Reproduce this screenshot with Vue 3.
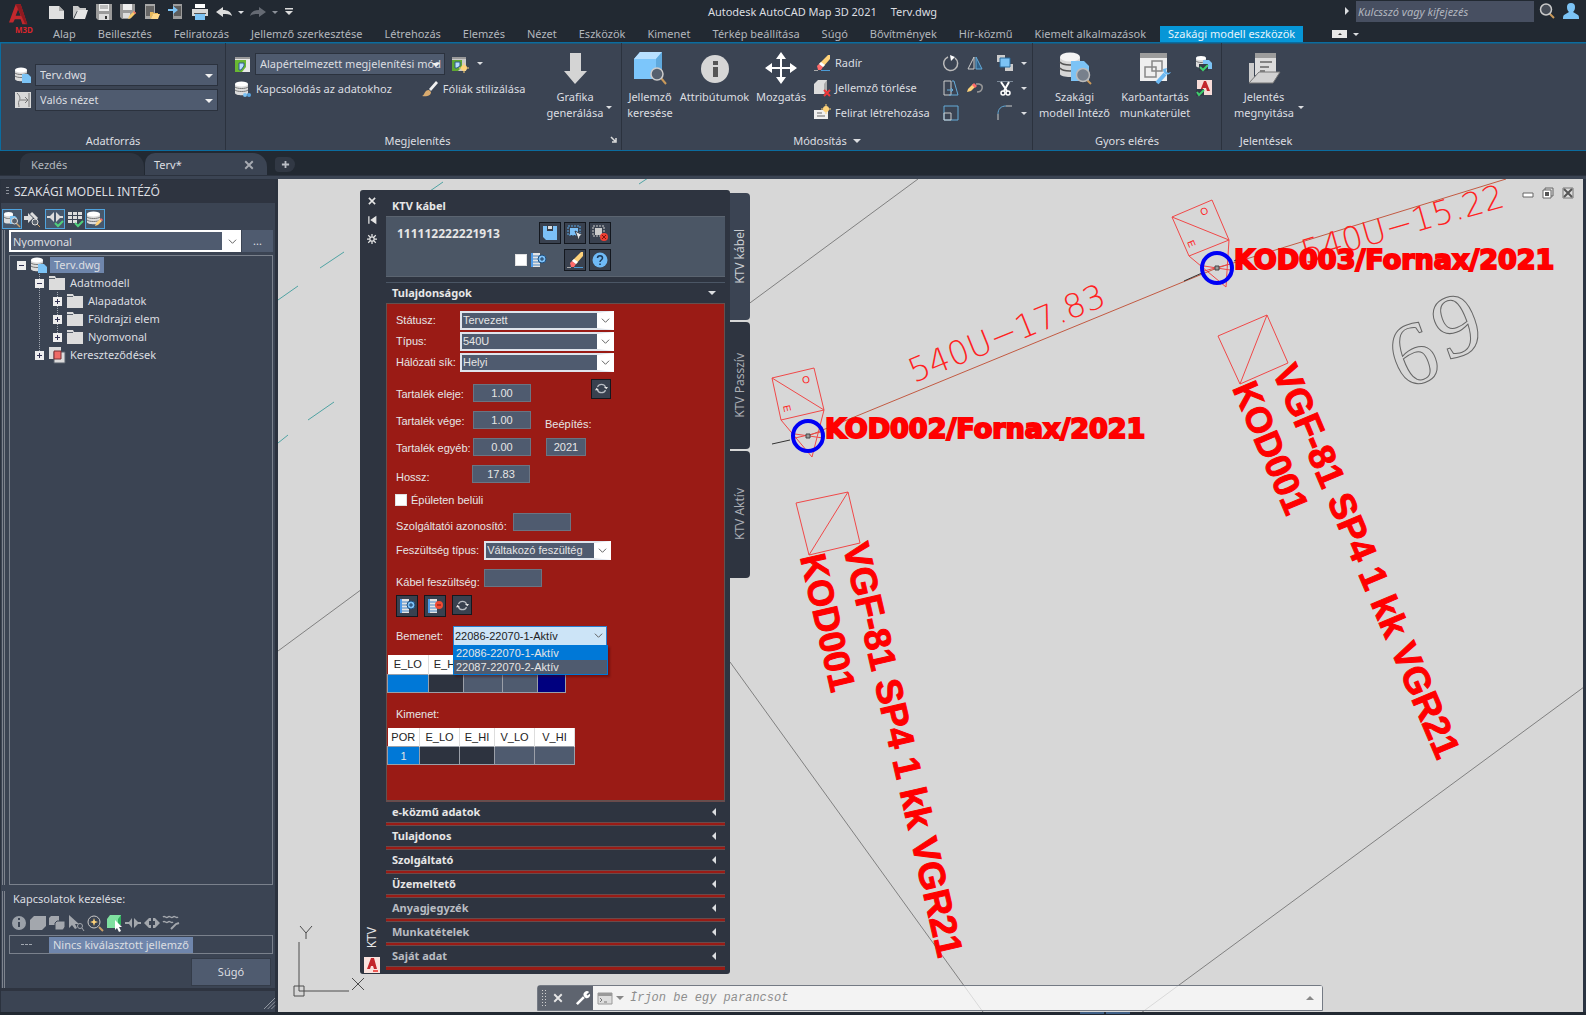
<script setup>
import { ref } from 'vue'

const icons = {
  newFile: '<path d="M1 2h10l5 5v8H1z" fill="#e0e0e0"/><path d="M11 2v5h5z" fill="#aaa"/>',
  open: '<path d="M1 15V2h5l2 2h6v3H5z" fill="#c9c9c9"/><path d="M2 15 6 6h10l-3 9z" fill="#e6e6e6"/>',
  save: '<path d="M0 0h16v16H2l-2-2z" fill="#9a9a9a"/><path d="M3 0h10v7H3z" fill="#efefef"/><path d="M3 10h10v6H3z" fill="#dcdcdc"/><path d="M9 12h2v3H9z" fill="#333"/><path d="M4 2h8M4 4h8" stroke="#888"/>',
  saveAs: '<path d="M0 0h15v9l-5 6H2l-2-2z" fill="#9a9a9a"/><path d="M3 0h9v6H3z" fill="#efefef"/><path d="M3 9h7v5H3z" fill="#ddd"/><path d="m8 15 1-3 5-5 2 2-5 5z" fill="#f5c96b"/><path d="m14 7 2 2-1 1-2-2z" fill="#e86b6b"/>',
  openMobile: '<path d="M1 0h10v15H1z" fill="#a8a8a8"/><path d="M2 2h8v10H2z" fill="#666"/><path d="M6 15V8h3l1 1h4v2H9z" fill="#e8b95c"/><path d="m7 15 2-5h7l-2 5z" fill="#ffd98a"/>',
  saveMobile: '<path d="M5 0h9v15H5z" fill="#9c9c9c"/><path d="M6 2h7v10H6z" fill="#5d5d5d"/><path d="M0 5h5V2l5 4-5 4V7H0z" fill="#7cc3f5"/>',
  print: '<path d="M3 0h10v4H3z" fill="#fff"/><path d="M0 5h16v7H0z" fill="#d8d8d8"/><path d="M2 9h12v1H2z" fill="#555"/><path d="M3 10h10v6H3z" fill="#7cc3f5"/>',
  undo: '<path d="m0 8 7-5v3c5 0 8 2 9 6-3-2-5-2-9-2v3z" fill="#dcdcdc"/>',
  redo: '<path d="M16 8 9 3v3c-5 0-8 2-9 6 3-2 5-2 9-2v3z" fill="#656a73"/>',
  qatMenu: '<path d="M4 4h8v1.500H4zM4 7h8l-4 4z" fill="#dcdcdc"/>',
  lens: '<path d="m10 10 5 5" stroke="#c9995a" stroke-width="2"/><circle cx="7" cy="6.500" r="5.500" fill="#454b55" stroke="#c9c9c9" stroke-width="1.500"/>',
  user: '<path d="M4 4a4 4 0 0 1 8 0c0 3-1 4-2 5l5 3c1 1 1 2 1 4H0c0-2 0-3 1-4l5-3C5 8 4 7 4 4z" fill="#7cc3f5"/>',
  dbFile: '<path d="M0 3v9c0 3 12 3 12 0V3z" fill="#dcdcdc"/><path d="M0 6c2 2 10 2 12 0M0 9c2 2 10 2 12 0" stroke="#777" fill="none"/><ellipse cx="6" cy="3" rx="6" ry="2.500" fill="#fff"/><path d="M7 7h6l3 3v6H7z" fill="#7cc3f5"/>',
  viewMode: '<path d="M0 0h16v16H0z" fill="#d9d9d9"/><path d="M2 1c4 4 3 6 2 8s0 4 0 6M5 8h8M10 5l3 3-3 3M14 1v14" stroke="#777" fill="none"/>',
  mapStyle: '<path d="M0 1h15v15H0z" fill="#e8e8e8"/><path d="M0 1h15v2H0z" fill="#999"/><path d="M0 4h11v7l-4 5H0z" fill="#69b832"/><path d="M4 7h5v3l-3 4H4z" fill="#b8dcff" stroke="#2f5a8b"/>',
  mapStyleNew: '<path d="M0 1h14v14H0z" fill="#c9c9c9"/><path d="M0 1h14v2H0z" fill="#999"/><path d="M0 4h10v7l-4 4H0z" fill="#5ea631"/><path d="M3 6h5v4l-3 2H3z" fill="#b8dcff" stroke="#2f5a8b"/><circle cx="12" cy="12" r="3" fill="#ffd37a"/><path d="M12 7v10M7 12h10" stroke="#ffd37a"/>',
  db: '<path d="M0 3v9c0 3 13 3 13 0V3z" fill="#dcdcdc"/><path d="M0 6c2 2 11 2 13 0M0 9c2 2 11 2 13 0" stroke="#777" fill="none"/><ellipse cx="6.500" cy="3" rx="6.500" ry="2.500" fill="#fff"/><circle cx="10" cy="14" r="2" fill="#7cc3f5"/><circle cx="14" cy="14" r="2" fill="#5aa5df"/>',
  brush: '<path d="m7 8 7-8 2 2-7 8z" fill="#f2f2f2"/><path d="M0 15c3-1 2-6 7-6l2 2c0 4-5 5-9 4z" fill="#d9ab6f"/>',
  eraser: '<path d="m5 9 9-9h2v4l-7 8z" fill="#ffd37a"/><path d="m3 11 2-2 4 3-2 3H4z" fill="#ff6b6b"/><path d="m5 9 2-2 4 3-2 2z" fill="#fff"/><path d="M0 15.500h4" stroke="#aaa"/><path d="M7 15.500h9" stroke="#4d9bd6"/>',
  cubeDel: '<path d="M0 4 4 0h9v10l-3 4H0z" fill="#dcdcdc"/><path d="m10 4 3-4v10l-3 4z" fill="#aaa"/><path d="m10 10 6 6m0-6-6 6" stroke="#f0373a" stroke-width="2"/>',
  label: '<path d="M0 5h14v9H0z" fill="#f0f0f0"/><path d="M3 8h5M3 11h8" stroke="#666"/><circle cx="12" cy="4" r="3" fill="#ffd37a"/><path d="M12-1v10M7 4h10" stroke="#ffd37a"/>',
  rotate: '<path d="M12 3a7 7 0 1 1-7-1" fill="none" stroke="#bbb" stroke-width="1.500"/><path d="m7 0 5 2-4 4z" fill="#fff"/>',
  mirror: '<path d="M7 2v12H1z" fill="none" stroke="#ccc"/><path d="M9 2v12h6z" fill="#2f5f86" stroke="#64abd9"/>',
  bringFront: '<path d="M0 0h8v7H0zM8 9h8v7H8z" fill="#ccc"/><path d="M3 3h10v9H3z" fill="#7cc3f5" stroke="#2b6a9c"/>',
  stretch: '<path d="M1 1h7v14H1z" fill="none" stroke="#ccc"/><path d="M9 1h2l4 14H6M4 10h6M8 8l2 2-2 2" fill="none" stroke="#64abd9"/>',
  editPoly: '<path d="M9 4h3c5 1 4 8-2 8" fill="none" stroke="#999" stroke-width="1.500"/><path d="m0 12 1-3 5-5 3 2-5 5z" fill="#ffd37a"/><path d="m5 5 2-2 3 3-2 2z" fill="#ff6b6b"/>',
  trim: '<path d="M0 1.500h16" stroke="#7d8a99"/><path d="m4 2 6 9M12 2 7 11" stroke="#fff" stroke-width="2"/><circle cx="6" cy="13" r="2" fill="none" stroke="#fff" stroke-width="1.500"/><circle cx="11" cy="13" r="2" fill="none" stroke="#fff" stroke-width="1.500"/>',
  scale: '<path d="M1 1h14v14H1z" fill="none" stroke="#64abd9"/><path d="M1 8h7v7H1z" fill="none" stroke="#ccc"/>',
  fillet: '<path d="M1 15V9" stroke="#ccc"/><path d="M1 9c0-5 3-8 8-8" fill="none" stroke="#64abd9"/><path d="M9 1h6" stroke="#ccc"/>',
  dbCheck: '<path d="M0 3v8c0 2 10 2 10 0V3z" fill="#dcdcdc"/><path d="M0 6c2 2 8 2 10 0" stroke="#777" fill="none"/><ellipse cx="5" cy="3" rx="5" ry="2" fill="#fff"/><path d="M7 5h6l3 3v6H7z" fill="#7cc3f5"/><path d="M3 9h9v7H3z" fill="#333b47"/><path d="m4 12 3 3 5-5" stroke="#3fcf6c" stroke-width="2" fill="none"/>',
  cadCheck: '<path d="M1 0h15v15H1z" fill="#f7dcd8"/><path d="m4 11 4-10h2l4 10h-3l-1-3H7l-1 3z" fill="#c3262b"/><path d="M0 9h8v7H0z" fill="#333b47"/><path d="m1 12 2 3 5-5" stroke="#3fcf6c" stroke-width="2" fill="none"/>',
  dbLens: '<path d="M0 3v8c0 2 9 2 9 0V3z" fill="#dcdcdc"/><path d="M0 6c2 2 7 2 9 0" stroke="#777" fill="none"/><ellipse cx="4.500" cy="3" rx="4.500" ry="2" fill="#fff"/><path d="M6 5h5l2 2v6H6z" fill="#7cc3f5"/><path d="m12 12 4 4" stroke="#caa06a" stroke-width="1.500"/><circle cx="10.500" cy="10" r="3" fill="#59616c" stroke="#ddd"/>',
  flowLens: '<path d="M0 5h4V2l5 5-5 5V9H0z" fill="#ddd"/><path d="m7 2 6 6" stroke="#ddd" stroke-width="3"/><path d="m13 13 3 3" stroke="#caa06a"/><circle cx="11" cy="11" r="3" fill="#59616c" stroke="#ddd"/>',
  flowCheck: '<path d="M0 5h3l4-4v10L3 7H0zM16 5h-3L9 1v10l4-4h3z" fill="#ddd"/><path d="m8 12 3 3 5-5" stroke="#4fd07c" stroke-width="2" fill="none"/>',
  gridCheck: '<path d="M1 1h4v3H1zM6 1h4v3H6zM11 1h4v3h-4zM1 5h4v3H1zM6 5h4v3H6zM11 5h4v3h-4zM1 9h4v3H1zM6 9h4v3H6z" fill="#ddd"/><path d="m8 12 3 3 5-5" stroke="#4fd07c" stroke-width="2" fill="none"/>',
  dbEdit: '<path d="M0 3v8c0 3 13 3 13 0V3z" fill="#dcdcdc"/><path d="M0 6c2 2 11 2 13 0M0 9c2 2 11 2 13 0" stroke="#777" fill="none"/><ellipse cx="6.500" cy="3" rx="6.500" ry="2.500" fill="#fff"/><path d="m8 15 1-3 4-4 2 2-4 4z" fill="#ffd37a"/><path d="m13 8 2 2 1-1-2-2z" fill="#ff6b6b"/>',
  folder: '<path d="M0 1h6l1 2h9v12H0z" fill="#dcdcdc"/><path d="M0 3.500h6" stroke="#59616c"/>',
  cross: '<path d="M0 0h12v12H0z" fill="#dcdcdc"/><path d="M5 5h11v11H5z" fill="#dcdcdc" stroke="#59616c"/><path d="M5 4h7v8H5z" fill="#ef6a66" stroke="#7a2f33"/>',
  info: '<circle cx="8" cy="8" r="7" fill="#9aa0a8"/><path d="M7 7h2v5H7zM7 3h2v2H7z" fill="#3b4453"/>',
  box: '<path d="M0 5 4 1h12v10l-4 4H0z" fill="#a3a7ad"/>',
  boxes: '<path d="M0 3 2 1h8v6l-2 3H0z" fill="#a3a7ad"/><path d="M6 8 8 6h8v6l-2 3H6z" fill="#a3a7ad" stroke="#3b4453"/>',
  pick: '<path d="M1 0v13l3-3 3 4 2-1-2-4h4z" fill="#a3a7ad"/><circle cx="12" cy="11" r="2.500" fill="none" stroke="#a3a7ad"/><path d="m14 13 2 3" stroke="#a3a7ad"/>',
  zoomIn: '<circle cx="7" cy="7" r="6" fill="none" stroke="#c9c9c9"/><path d="m7 3 1 3 3 1-3 1-1 3-1-3-3-1 3-1z" fill="#ffd37a"/><path d="m12 12 4 4" stroke="#caa06a" stroke-width="2"/>',
  greenBox: '<path d="M1 4 4 0h11v9l-3 4H1z" fill="#7fe0a0"/><path d="m12 4 3-4v9l-3 4z" fill="#2fae5c"/><path d="M9 5v10l2-2 2 4 2-1-2-4h3z" fill="#fff"/>',
  link: '<path d="M0 7h4l3-4v10L4 9H0zM16 7h-3L9 3v10l4-4h3z" fill="#a3a7ad"/>',
  link2: '<path d="M0 8 5 3h2v3H5v4h2v3H5zM16 8l-5-5H9v3h2v4H9v3h2z" fill="#a3a7ad"/>',
  wave: '<path d="M0 2c2-2 3 2 5 0s3 2 5 0 3 2 5 0M0 7c2-2 3 2 5 0s3 2 5 0" stroke="#a3a7ad" stroke-width="1.500" fill="none"/><path d="m8 14 5-5 3-1" stroke="#a3a7ad" stroke-width="2"/>',
  disk: '<path d="M1 1h14v14H4l-3-3z" fill="#7cc0f7"/><path d="M5 0h6v6H5z" fill="#333b47"/><path d="M6 1h4v3H6z" fill="#ddd"/>',
  select: '<path d="M1 1h12v9H1z" fill="none" stroke="#5aa8e6" stroke-dasharray="2 1"/><path d="M3 3h8v7H3z" fill="#7cc0f7"/><path d="m8 6 8 4-3 1-1 5z" fill="#e6e6e6" stroke="#333b47"/>',
  selectDel: '<path d="M1 1h11v10H1z" fill="none" stroke="#ccc" stroke-dasharray="2 1"/><path d="M3 3h7v7H3z" fill="#ccc"/><circle cx="12" cy="12" r="4" fill="#ef3e32"/><path d="m10 10 4 4m0-4-4 4" stroke="#7c1510"/>',
  rowAdd: '<path d="M1 1h9v14H1z" fill="#e4e4e4"/><path d="M2 1v14" stroke="#4d9bea" stroke-width="2"/><path d="M3 4h7M3 7h7M3 10h7M3 13h7" stroke="#4b87c4"/><circle cx="12" cy="7" r="4" fill="#7cc0f7" stroke="#1f4e7d"/><path d="M12 5v4M10 7h4" stroke="#1f3b5c"/>',
  rowDel: '<path d="M1 1h9v14H1z" fill="#e4e4e4"/><path d="M2 1v14" stroke="#4d9bea" stroke-width="2"/><path d="M3 4h7M3 7h7M3 10h7M3 13h7" stroke="#4b87c4"/><circle cx="12" cy="7" r="4" fill="#f04a32"/><path d="M10 7h4" stroke="#7c1510"/>',
  help: '<circle cx="8" cy="8" r="7.500" fill="#6fbaf7"/><path d="M5.500 6c0-3 5-3 5 0 0 2-2.500 2-2.500 4M8 11.500v1.500" stroke="#1d3a5a" stroke-width="1.500" fill="none"/>',
  refresh: '<path d="M3 6a5.500 5.500 0 0 1 10 0M13 10a5.500 5.500 0 0 1-10 0" stroke="#b9bdc4" stroke-width="1.500" fill="none"/><path d="M11 6h5l-2 3zM5 10H0l2-3z" fill="#e6e6e6"/>',
  close: '<path d="m3 3 10 10M13 3 3 13" stroke="currentColor" stroke-width="2.500"/>',
  pin: '<path d="M3 2v12M14 3v10L7 8z" stroke="#e6e6e6" stroke-width="2" fill="#e6e6e6"/>',
  gear: '<circle cx="8" cy="8" r="3.500" fill="none" stroke="#e6e6e6" stroke-width="2"/><path d="M8 0v4M8 12v4M0 8h4M12 8h4M2 2l3 3M11 11l3 3M14 2l-3 3M5 11l-3 3" stroke="#e6e6e6" stroke-width="2"/>',
  cad: '<path d="M0 0h16v16H0z" fill="#fbe3de"/><path d="m3 12 4-11h3l3 11h-3l-1-3H7l-1 3z" fill="#c3262b"/><path d="M9 13h5v2H9z" fill="#ee5a55"/>',
  wrench: '<path d="m1 15 8-8" stroke="#fff" stroke-width="3"/><path d="M15 1a4 4 0 0 0-6 5l2 2a4 4 0 0 0 5-5l-3 2-1-1z" fill="#fff"/>',
  prompt: '<path d="M1 3h14v11H1z" fill="#ddd" stroke="#999"/><path d="M1 3h14v3H1z" fill="#999"/><path d="m3 8 2 2-2 2M7 12h3" stroke="#777" fill="none"/>',
  arrowDown: '<path d="M11 1h11v18h6L16 32 5 19h6z" fill="#d4d4d4"/>',
  cubeFind: '<path d="M0 7 6 0h22v19l-6 8H0z" fill="#7cc6fb"/><path d="M0 7 6 0h22l-6 7z" fill="#b8e0ff"/><path d="m22 7 6-7v20l-6 7z" fill="#5fa9dd"/><path d="m27 26 5 6" stroke="#c9995a" stroke-width="2"/><circle cx="23" cy="22" r="6" fill="#56606e" stroke="#ccc" stroke-width="1.500"/>',
  bigInfo: '<circle cx="16" cy="17" r="14" fill="#d6d6d6"/><path d="M14 15h5v10h-5zM14 9h5v4h-5z" fill="#555"/>',
  move: '<path d="M16 5v22M5 16h22" stroke="#fff" stroke-width="2"/><path d="m16 0 5 7H11zM16 32l5-7H11zM0 16l7-5v10zM32 16l-7-5v10z" fill="#fff"/>',
  bigDbFind: '<path d="M1 5v17c0 4 20 4 20 0V5z" fill="#d6d6d6"/><path d="M1 10c3 4 17 4 20 0M1 16c3 4 17 4 20 0" stroke="#555" stroke-width="1.500" fill="none"/><ellipse cx="11" cy="5" rx="10" ry="4.500" fill="#f4f4f4"/><path d="M12 9h13l5 5v15H12z" fill="#7cc3f5"/><path d="m27 27 5 5" stroke="#c9995a" stroke-width="2"/><circle cx="24" cy="23" r="6.500" fill="#77808c" stroke="#bbb" stroke-width="1.500"/>',
  maintain: '<path d="M1 1h27v28H1z" fill="#efefef"/><path d="M1 1h27v5H1z" fill="#9c9c9c"/><path d="M6 15h11v10H6zM13 9h10v10H13z" fill="#efefef" stroke="#888" stroke-width="1.500"/><path d="m18 31 8-9" stroke="#6bb8f2" stroke-width="4"/><path d="M24 17c0 5 5 8 8 3l-3 1-2-2 1-3z" fill="#6bb8f2"/>',
  report: '<path d="M1 11h5v20H1z" fill="#ccc"/><path d="M7 1h21v22H7z" fill="#dcdcdc"/><path d="M7 1h21v5H7z" fill="#9c9c9c"/><path d="M12 10h12M12 15h9M12 19h5" stroke="#666" stroke-width="1.500"/><path d="M1 31 11 20h21l-7 11z" fill="#d2d2d2" stroke="#777"/>'
}

const quick = ['newFile', 'open', 'save', 'saveAs', 'openMobile', 'saveMobile', 'print']
const tabs = ['Alap', 'Beillesztés', 'Feliratozás', 'Jellemző szerkesztése', 'Létrehozás', 'Elemzés', 'Nézet', 'Eszközök', 'Kimenet', 'Térkép beállítása', 'Súgó', 'Bővítmények', 'Hír-közmű', 'Kiemelt alkalmazások', 'Szakági modell eszközök']
const activeTab = ref('Szakági modell eszközök')
const modifyList = [
  { icon: 'eraser', text: 'Radír' },
  { icon: 'cubeDel', text: 'Jellemző törlése' },
  { icon: 'label', text: 'Felirat létrehozása' }
]
const sideTools = [
  { icon: 'dbLens', on: true },
  { icon: 'flowLens' },
  { icon: 'flowCheck', on: true, split: true },
  { icon: 'gridCheck' },
  { icon: 'dbEdit', on: true }
]
const models = ['Alapadatok', 'Földrajzi elem', 'Nyomvonal']
const linkTools = ['info', 'box', 'boxes', 'pick', 'zoomIn', 'greenBox', 'link', 'link2', 'wave']
const combos = [
  { id: 'status', label: 'Státusz:', value: 'Tervezett' },
  { id: 'type', label: 'Típus:', value: '540U' },
  { id: 'plane', label: 'Hálózati sík:', value: 'Helyi' }
]
const inputs = ['22086-22070-1-Aktív', '22087-22070-2-Aktív']
const sections = [
  { text: 'e-közmű adatok' },
  { text: 'Tulajdonos' },
  { text: 'Szolgáltató' },
  { text: 'Üzemeltető' },
  { text: 'Anyagjegyzék', dim: true },
  { text: 'Munkatételek', dim: true },
  { text: 'Saját adat', dim: true }
]
const paletteTabs = ['KTV kábel', 'KTV Passzív', 'KTV Aktív']
const command = ref('')
const inside = ref(false)
</script>

<template>
  <div class="app">
    <header class="top">
      <div class="logo">
        <svg width="24" height="26" viewBox="0 0 24 26"><path d="M8 0h6l8 24h-6l-2-6H7l-2 4H0z" fill="#c2282d"/><path d="m11 6 3 8H8z" fill="#222932"/><path d="M8 0h6l8 24-3-1z" fill="#8f1a20"/></svg>
        <span>M3D</span>
      </div>
      <div class="top-main">
        <div class="title-row">
          <div class="quick">
            <button v-for="q in quick" :key="q" :aria-label="q"><svg viewBox="0 0 16 16" v-html="icons[q]" /></button>
            <button aria-label="undo"><svg viewBox="0 0 16 16" v-html="icons.undo" /></button>
            <i class="caret" />
            <button aria-label="redo"><svg viewBox="0 0 16 16" v-html="icons.redo" /></button>
            <i class="caret dim" />
            <button aria-label="menu"><svg viewBox="0 0 16 16" v-html="icons.qatMenu" /></button>
          </div>
          <div class="title"><span>Autodesk AutoCAD Map 3D 2021</span><span>Terv.dwg</span></div>
          <div class="search">
            <i class="play" />
            <input type="text" placeholder="Kulcsszó vagy kifejezés" aria-label="Keresés">
            <button aria-label="search"><svg viewBox="0 0 16 16" v-html="icons.lens" /></button>
            <button aria-label="user"><svg viewBox="0 0 16 16" v-html="icons.user" /></button>
          </div>
        </div>
        <nav class="tabs">
          <button v-for="t in tabs" :key="t" :class="{ active: t === activeTab }" @click="activeTab = t">{{ t }}</button>
          <span class="mini"><i /></span><i class="caret" />
        </nav>
      </div>
    </header>

    <section class="ribbon">
      <div class="panel source">
        <div class="body">
          <label class="field"><svg viewBox="0 0 16 16" v-html="icons.dbFile" /><span class="drop"><select aria-label="Forrás"><option>Terv.dwg</option></select><i class="caret wide" /></span></label>
          <label class="field"><svg viewBox="0 0 16 16" v-html="icons.viewMode" /><span class="drop"><select aria-label="Nézet"><option>Valós nézet</option></select><i class="caret wide" /></span></label>
        </div>
        <div class="caption">Adatforrás</div>
      </div>
      <div class="panel display">
        <div class="body">
          <div class="stack">
            <div class="line">
              <label class="field"><svg viewBox="0 0 16 16" v-html="icons.mapStyle" /><span class="drop"><select aria-label="Megjelenítési mód"><option>Alapértelmezett megjelenítési mód</option></select><i class="caret wide" /></span></label>
              <button class="flat" aria-label="new style"><svg viewBox="0 0 16 16" v-html="icons.mapStyleNew" /><i class="caret" /></button>
            </div>
            <div class="line spread">
              <button class="flat"><svg viewBox="0 0 16 16" v-html="icons.db" />Kapcsolódás az adatokhoz</button>
              <button class="flat"><svg viewBox="0 0 16 16" v-html="icons.brush" />Fóliák stilizálása</button>
            </div>
          </div>
          <button class="big"><svg viewBox="0 0 32 32" v-html="icons.arrowDown" /><span>Grafika<br>generálása</span></button>
          <i class="caret late" />
        </div>
        <div class="caption">Megjelenítés<svg class="launch" viewBox="0 0 8 8"><path d="M1 1l4 4M6 2v4H2" stroke="#ddd" stroke-width="1.500" fill="none"/></svg></div>
      </div>
      <div class="panel modify">
        <div class="body">
          <button class="big"><svg viewBox="0 0 32 32" v-html="icons.cubeFind" /><span>Jellemző<br>keresése</span></button>
          <button class="big"><svg viewBox="0 0 32 32" v-html="icons.bigInfo" /><span>Attribútumok</span></button>
          <button class="big"><svg viewBox="0 0 32 32" v-html="icons.move" /><span>Mozgatás</span></button>
          <div class="list">
            <button v-for="m in modifyList" :key="m.text" class="flat"><svg viewBox="0 0 16 16" v-html="icons[m.icon]" />{{ m.text }}</button>
          </div>
          <div class="tools">
            <svg viewBox="0 0 16 16" v-html="icons.rotate" /><svg viewBox="0 0 16 16" v-html="icons.mirror" /><svg viewBox="0 0 16 16" v-html="icons.bringFront" /><i class="caret" />
            <svg viewBox="0 0 16 16" v-html="icons.stretch" /><svg viewBox="0 0 16 16" v-html="icons.editPoly" /><svg viewBox="0 0 16 16" v-html="icons.trim" /><i class="caret" />
            <svg viewBox="0 0 16 16" v-html="icons.scale" /><span /><svg viewBox="0 0 16 16" v-html="icons.fillet" /><i class="caret" />
          </div>
        </div>
        <div class="caption">Módosítás<i class="caret wide" /></div>
      </div>
      <div class="panel fast">
        <div class="body">
          <button class="big"><svg viewBox="0 0 32 32" v-html="icons.bigDbFind" /><span>Szakági<br>modell Intéző</span></button>
          <button class="big"><svg viewBox="0 0 32 32" v-html="icons.maintain" /><span>Karbantartás<br>munkaterület</span></button>
          <div class="list">
            <button class="flat" aria-label="db check"><svg viewBox="0 0 16 16" v-html="icons.dbCheck" /></button>
            <button class="flat" aria-label="cad check"><svg viewBox="0 0 16 16" v-html="icons.cadCheck" /></button>
          </div>
        </div>
        <div class="caption">Gyors elérés</div>
      </div>
      <div class="panel reports">
        <div class="body">
          <button class="big"><svg viewBox="0 0 32 32" v-html="icons.report" /><span>Jelentés<br>megnyitása</span></button>
          <i class="caret late" />
        </div>
        <div class="caption">Jelentések</div>
      </div>
    </section>

    <nav class="docs">
      <button class="doc">Kezdés</button>
      <button class="doc current">Terv*<svg viewBox="0 0 16 16" v-html="icons.close" /></button>
      <button class="plus" aria-label="new tab"><svg viewBox="0 0 10 10"><path d="M5 1v8M1 5h8" stroke="#b9bdc4" stroke-width="2"/></svg></button>
    </nav>

    <main class="work">
      <aside class="side">
        <h2><i class="grip" />SZAKÁGI MODELL INTÉZŐ</h2>
        <div class="side-tools">
          <button v-for="s in sideTools" :key="s.icon" :class="{ on: s.on, split: s.split }" :aria-label="s.icon"><svg viewBox="0 0 16 16" v-html="icons[s.icon]" /></button>
        </div>
        <div class="ridge upper">
          <div class="pick">
            <span class="combo"><select aria-label="Réteg"><option>Nyomvonal</option></select><svg viewBox="0 0 10 10"><path d="M1 3l4 4 4-4" fill="none" stroke="#555" stroke-width="1"/></svg></span>
            <button class="more">...</button>
          </div>
          <div class="tree">
            <div class="node root"><b class="exp minus" /><svg viewBox="0 0 16 16" v-html="icons.dbFile" /><span class="chosen">Terv.dwg</span></div>
            <ul>
              <li>
                <div class="node"><b class="exp minus" /><svg viewBox="0 0 16 16" v-html="icons.folder" /><span>Adatmodell</span></div>
                <ul>
                  <li v-for="m in models" :key="m"><div class="node"><b class="exp" /><svg viewBox="0 0 16 16" v-html="icons.folder" /><span>{{ m }}</span></div></li>
                </ul>
              </li>
              <li><div class="node"><b class="exp" /><svg viewBox="0 0 16 16" v-html="icons.cross" /><span>Kereszteződések</span></div></li>
            </ul>
          </div>
        </div>
        <div class="ridge lower">
          <p>Kapcsolatok kezelése:</p>
          <div class="link-tools">
            <button v-for="l in linkTools" :key="l" :aria-label="l"><svg viewBox="0 0 16 16" v-html="icons[l]" /></button>
          </div>
          <div class="picked"><i /><span>Nincs kiválasztott jellemző</span></div>
          <button class="help">Súgó</button>
        </div>
        <div class="corner"><svg viewBox="0 0 12 12"><path d="M0 12 12 0M4 12l8-8M8 12l4-4" stroke="#9aa0a8"/></svg></div>
      </aside>

      <div class="canvas">
        <svg class="drawing" width="100%" height="100%">
          <g transform="translate(-278 -179)">
            <g class="parcel">
              <path d="M278 651 918 179M730 662l253 350M1584 687l-443 326" />
            </g>
            <path class="dash" d="M278 300l20-14M320 268l24-16M308 420l26-18M278 443l10-8M430 191l13-9M639 184l9-6" />
            <path class="cable" d="M808 436 1217 268 1506 179" />
            <g class="pole">
              <path d="M772 378 814 368 824 410 781 420zL824 410M781 420 812 457 824 410M795 434l28 4M795 438l26-6" />
              <path d="M1172 217 1212 200 1229 240 1189 256zL1229 240M1189 256l37 31 3-47M1204 266l26 4M1204 271l26-7" />
              <path d="M796 503 848 492 860 543 809 555zM848 492 809 555" />
              <path d="M1218 336 1267 315 1288 363 1240 384zM1267 315 1240 384" />
            </g>
            <path class="tick" d="M772 444l18-4M1184 281l18-8M1234 261l6-3" />
            <g class="tag">
              <text transform="translate(803 384) rotate(-13)">O</text>
              <text transform="translate(783 406) rotate(77)">E</text>
              <text transform="translate(1202 216) rotate(-23)">O</text>
              <text transform="translate(1187 242) rotate(67)">E</text>
            </g>
            <g class="length">
              <text transform="translate(914 383) rotate(-22)">540U−17.83</text>
              <text transform="translate(1305 264) rotate(-16)">540U−15.22</text>
            </g>
            <g class="number">
              <text transform="translate(1402 390) rotate(-20)">6</text>
              <text transform="translate(1446 361) rotate(-20)">9</text>
            </g>
            <g class="code">
              <text x="825" y="438">KOD002/Fornax/2021</text>
              <text x="1234" y="269">KOD003/Fornax/2021</text>
            </g>
            <g class="device">
              <text transform="translate(800 557) rotate(77)">KOD001</text>
              <text transform="translate(1232 388) rotate(67)">KOD001</text>
            </g>
            <g class="device long">
              <text transform="translate(843 546) rotate(77)">VGF-81 SP4 1 kk VGR21</text>
              <text transform="translate(1272 371) rotate(67)">VGF-81 SP4 1 kk VGR21</text>
            </g>
            <g class="ring"><circle cx="808" cy="436" r="15" /><circle cx="1217" cy="268" r="15" /></g>
            <path class="node-box" d="M806 434h4v4h-4zM1215 266h4v4h-4z" />
            <path class="axis" d="M299 942v49h50M294 986h10v10h-10zM300 926l6 7 6-7M306 933v6M352 978l12 12M364 978l-12 12" />
          </g>
        </svg>
        <div class="win">
          <svg viewBox="0 0 12 12"><path d="M1 6h10v4H1z" fill="#fff" stroke="#666"/></svg>
          <svg viewBox="0 0 12 12"><path d="M3 1h8v8H3z" fill="#ddd" stroke="#666"/><path d="M1 3h8v8H1z" fill="#fff" stroke="#666"/><path d="M3 5h4v4H3z" fill="#555"/></svg>
          <svg viewBox="0 0 12 12"><path d="M1 1h10v10H1z" fill="#ddd" stroke="#777"/><path d="m2 2 8 8M10 2l-8 8" stroke="#555" stroke-width="2"/></svg>
        </div>

        <section class="palette">
          <div class="rail">
            <svg viewBox="0 0 16 16" v-html="icons.close" />
            <svg viewBox="0 0 16 16" v-html="icons.pin" />
            <svg viewBox="0 0 16 16" v-html="icons.gear" />
            <span class="rail-name">KTV</span>
            <svg class="cad" viewBox="0 0 16 16" v-html="icons.cad" />
          </div>
          <div class="content">
            <h3>KTV kábel</h3>
            <div class="ident">
              <strong>111112222221913</strong>
              <div class="acts">
                <button class="ib" aria-label="save"><svg viewBox="0 0 16 16" v-html="icons.disk" /></button>
                <button class="ib" aria-label="select"><svg viewBox="0 0 16 16" v-html="icons.select" /></button>
                <button class="ib" aria-label="deselect"><svg viewBox="0 0 16 16" v-html="icons.selectDel" /></button>
                <label class="mark"><input type="checkbox" aria-label="multi"><svg viewBox="0 0 16 16" v-html="icons.rowAdd" /></label>
                <button class="ib" aria-label="erase"><svg viewBox="0 0 16 16" v-html="icons.eraser" /></button>
                <button class="ib" aria-label="help"><svg viewBox="0 0 16 16" v-html="icons.help" /></button>
              </div>
            </div>
            <h3 class="bar">Tulajdonságok<i class="caret wide" /></h3>
            <form class="form" @submit.prevent>
              <div v-for="c in combos" :key="c.id" class="row combo-row">
                <label :for="c.id">{{ c.label }}</label>
                <span class="combo"><select :id="c.id"><option>{{ c.value }}</option></select><svg viewBox="0 0 10 10"><path d="M1 3l4 4 4-4" fill="none" stroke="#555"/></svg></span>
              </div>
              <div class="row num first">
                <label for="r1">Tartalék eleje:</label><input id="r1" value="1.00">
                <button class="ib small" aria-label="refresh"><svg viewBox="0 0 16 16" v-html="icons.refresh" /></button>
              </div>
              <div class="row num"><label for="r2">Tartalék vége:</label><input id="r2" value="1.00"><label for="built" class="built">Beépítés:</label></div>
              <div class="row num"><label for="r3">Tartalék egyéb:</label><input id="r3" value="0.00"><input id="built" class="year" value="2021"></div>
              <div class="row num len"><label for="r4">Hossz:</label><input id="r4" value="17.83"></div>
              <label class="row check"><input v-model="inside" type="checkbox">Épületen belüli</label>
              <div class="row free"><label for="r5">Szolgáltatói azonosító:</label><input id="r5"></div>
              <div class="row volt"><label for="r6">Feszültség típus:</label><span class="combo"><select id="r6"><option>Váltakozó feszültég</option></select><svg viewBox="0 0 10 10"><path d="M1 3l4 4 4-4" fill="none" stroke="#555"/></svg></span></div>
              <div class="row free kv"><label for="r7">Kábel feszültség:</label><input id="r7"></div>
              <div class="row edit">
                <button class="ib" aria-label="add"><svg viewBox="0 0 16 16" v-html="icons.rowAdd" /></button>
                <button class="ib" aria-label="remove"><svg viewBox="0 0 16 16" v-html="icons.rowDel" /></button>
                <button class="ib small" aria-label="reload"><svg viewBox="0 0 16 16" v-html="icons.refresh" /></button>
              </div>
              <div class="row feed">
                <label for="r8">Bemenet:</label>
                <span class="combo lit"><select id="r8"><option>{{ inputs[0] }}</option></select><svg viewBox="0 0 10 10"><path d="M1 3l4 4 4-4" fill="none" stroke="#555"/></svg>
                  <ul class="options"><li v-for="(o, i) in inputs" :key="o" :class="{ hot: i === 0 }">{{ o }}</li></ul>
                </span>
              </div>
              <table class="t-in">
                <thead><tr><th>E_LO</th><th>E_HI</th><th /><th /><th /></tr></thead>
                <tbody><tr><td class="blue" /><td class="dark" /><td /><td /><td class="navy" /></tr></tbody>
              </table>
              <p class="out">Kimenet:</p>
              <table class="t-out">
                <thead><tr><th>POR</th><th>E_LO</th><th>E_HI</th><th>V_LO</th><th>V_HI</th></tr></thead>
                <tbody><tr><td class="blue">1</td><td class="dark" /><td class="dark" /><td /><td /></tr></tbody>
              </table>
            </form>
            <div class="fold">
              <button v-for="s in sections" :key="s.text" :class="{ dim: s.dim }">{{ s.text }}<i class="back" /></button>
            </div>
          </div>
          <div class="side-tabs"><button v-for="(t, i) in paletteTabs" :key="t" :class="{ on: i === 0 }"><span>{{ t }}</span></button></div>
        </section>

        <div class="cmd">
          <div class="cmd-head"><i class="dots" /><svg viewBox="0 0 16 16" v-html="icons.close" /><svg viewBox="0 0 16 16" v-html="icons.wrench" /></div>
          <label class="cmd-body"><svg viewBox="0 0 16 16" v-html="icons.prompt" /><i class="caret wide" /><input v-model="command" type="text" placeholder="Írjon be egy parancsot" aria-label="Parancs"><i class="up" /></label>
        </div>
      </div>
    </main>
    <footer class="foot"><i /><i /></footer>
  </div>
</template>

<style>
body { margin: 0; background: #222932; }
</style>

<style scoped>
* { box-sizing: border-box; }
.app { min-height: 100vh; display: flex; flex-direction: column; background: #222932; color: #dcdee1; font: 11px/16px "Noto Sans", "Open Sans", sans-serif; overflow: hidden; }
button { font: inherit; color: inherit; background: none; border: 0; padding: 0; margin: 0; }
input, select { font: inherit; color: inherit; margin: 0; }
select { appearance: none; border-radius: 0; outline: 0; }
ul { list-style: none; margin: 0; padding: 0; }
p, h2, h3 { margin: 0; font-weight: 400; }
svg { display: block; width: 16px; height: 16px; flex: none; overflow: visible; }
.caret { width: 0; height: 0; flex: none; border: 3px solid transparent; border-top-color: #dcdee1; border-bottom: 0; }
.caret.wide { border-width: 4px; border-bottom: 0; }
.caret.dim { border-top-color: #8c9199; }

.top { display: flex; height: 42px; }
.logo { width: 44px; padding: 4px 0 0 9px; color: #d8262c; font-size: 8px; line-height: 8px; font-weight: 700; }
.logo svg { width: 20px; height: 22px; }
.logo span { display: block; padding-left: 6px; }
.top-main { flex: 1; display: flex; flex-direction: column; justify-content: space-between; min-width: 0; }
.title-row { display: flex; height: 24px; align-items: center; }
.quick { display: flex; align-items: center; gap: 8px; padding-left: 4px; width: 256px; height: 20px; }
.quick .caret { margin: 0 -2px; }
.quick > .caret + button:last-child { margin-left: -3px; }
.title { flex: 1; display: flex; justify-content: center; gap: 14px; }
.search { display: flex; align-items: center; height: 22px; align-self: flex-start; }
.search input { width: 178px; height: 21px; background: #474f61; border: 0; padding: 0 0 0 2px; font-style: italic; }
.search input::placeholder { color: #b2b6bf; opacity: 1; }
.search button { margin-left: 5px; }
.search button + button { margin: 0 7px 0 8px; }
.play { border: 4px solid transparent; border-left-color: #dcdee1; border-right: 0; margin-right: 7px; }
.tabs { display: flex; align-items: center; gap: 6px; color: #b3b7bd; height: 16px; padding-left: 1px; }
.tabs button { padding: 0 8px; height: 16px; line-height: 16px; white-space: nowrap; }
.tabs .active { background: #0696d7; color: #e6f4fb; }
.mini { width: 15px; height: 8px; background: #e8e8e8; margin-left: 23px; display: flex; justify-content: center; align-items: center; }
.mini i { border: 2px solid transparent; border-bottom-color: #333; border-top: 0; }

.ribbon { display: flex; height: 109px; background: #3b4453; border: 1px solid #0b6c9f; border-right: 0; box-shadow: inset 0 1px #1f5878; }
.panel { display: flex; flex-direction: column; border-right: 1px solid #2b323e; flex: none; }
.body { flex: 1; display: flex; align-items: flex-start; padding-top: 9px; }
.caption { height: 19px; line-height: 16px; display: flex; justify-content: center; align-items: center; gap: 6px; position: relative; }
.display .caption { padding-right: 12px; }
.launch { position: absolute; right: 3px; top: 5px; width: 8px; height: 8px; }
.field { display: flex; align-items: center; gap: 4px; }
.drop { position: relative; display: flex; }
.drop select { width: 183px; height: 22px; background: #4f5b6f; border: 1px solid #2b323e; padding: 0 4px; }
.drop .caret { position: absolute; right: 5px; top: 10px; border-top-color: #f0f0f0; }
.source { width: 225px; }
.source .body { flex-direction: column; padding: 21px 0 0 14px; gap: 3px; }
.display { width: 396px; }
.display .body { padding-left: 9px; }
.display .drop select { width: 190px; padding-right: 0; }
.stack { width: 301px; display: flex; flex-direction: column; gap: 2px; }
.line { display: flex; gap: 7px; align-items: center; height: 23px; }
.line.spread { gap: 30px; }
.flat { display: flex; align-items: center; gap: 5px; height: 17px; white-space: nowrap; text-align: left; }
.line > .flat .caret { margin-left: 4px; }
.big { display: flex; flex-direction: column; align-items: center; gap: 5px; flex: none; }
.big svg { width: 32px; height: 32px; }
.display .big { width: 78px; }
.late { margin: 54px 0 0 -8px; }
.modify { width: 411px; }
.modify .body { padding-left: 2px; }
.modify .big:nth-child(1) { width: 52px; }
.modify .big:nth-child(2) { width: 77px; }
.modify .big:nth-child(3) { width: 56px; }
.list { display: flex; flex-direction: column; gap: 8px; padding: 2px 0 0 5px; }
.modify .list { width: 134px; }
.tools { display: grid; grid-template-columns: 16px 16px 22px 6px; column-gap: 8px; row-gap: 9px; align-items: center; padding-top: 3px; }
.tools svg:nth-child(4n + 3) { justify-self: end; }
.fast { width: 189px; }
.fast .big { width: 83px; }
.fast .big + .big { width: 78px; }
.fast .list { padding-left: 2px; }
.reports { width: 88px; border-right: 0; }
.reports .big { width: 84px; }

.docs { display: flex; height: 25px; align-items: flex-end; padding-left: 20px; border-bottom: 1px solid #2b323e; }
.doc { width: 124px; height: 22px; padding: 2px 0 0 11px; text-align: left; background: #2e3540; border-radius: 10px 14px 0 0; color: #b3b7bd; }
.doc.current { width: 122px; margin-left: 1px; padding: 2px 12px 0 9px; display: flex; align-items: center; justify-content: space-between; background: #3b4453; color: #dcdee1; }
.doc svg { width: 12px; height: 12px; color: #a7abb2; }
.plus { width: 20px; height: 15px; margin: 0 0 3px 8px; background: #313844; border-radius: 4px 8px 8px 4px; display: grid; place-items: center; }
.plus svg { width: 9px; height: 9px; }

.work { flex: 1; display: flex; border-top: 3px solid #3b4453; }
.side { width: 278px; flex: none; background: #3b4453; border: solid #2b323e; border-width: 1px 3px 0 1px; display: flex; flex-direction: column; }
.side h2 { height: 23px; background: #2e3440; font-size: 12px; line-height: 21px; display: flex; align-items: center; gap: 5px; padding-left: 5px; }
.grip { width: 3px; height: 9px; background: repeating-linear-gradient(#8d929b 0 1px, transparent 1px 3px); }
.side-tools { display: flex; margin: 6px 4px 1px 1px; }
.side-tools button { width: 20px; height: 20px; display: grid; place-items: center; border: 1px solid transparent; }
.side-tools .split { margin-left: 3px; }
.side-tools .on { background: #47586c; border-color: #4fa3dd; }
.ridge { margin: 0 2px 0 1px; padding-left: 4px; border-left: 3px double #7d838d; display: flex; flex-direction: column; }
.upper { flex: 1; }
.pick { display: flex; gap: 1px; height: 22px; }
.combo { position: relative; display: flex; }
.combo select { background: #4f5b6f; border: 2px solid #dfe4ec; border-right: 17px solid #fff; padding: 0 1px; width: 154px; height: 19px; line-height: 13px; }
.combo svg { position: absolute; right: 4px; top: 5px; width: 9px; height: 9px; pointer-events: none; }
.pick .combo { flex: 1; }
.pick .combo select { width: 100%; height: 22px; border: 2px solid #fff; border-right-width: 19px; padding: 0 2px; }
.pick .combo svg { top: 7px; right: 4px; }
.more { width: 31px; background: #4f5b6f; }
.tree { flex: 1; border: 1px solid #7a818c; margin-top: 3px; padding: 0 0 0 7px; }
.tree ul { padding-left: 18px; position: relative; }
.tree ul::before { content: ""; position: absolute; left: 22px; top: 0; bottom: 9px; border-left: 1px dotted #a2a8b1; }
.node { display: flex; align-items: center; height: 18px; gap: 5px; position: relative; }
.root span { margin-left: -2px; }
.chosen, .picked span { background: #6f86ac; padding: 0 4px; }
.exp { width: 9px; height: 9px; background: linear-gradient(#335, #335) center/5px 1px no-repeat, linear-gradient(#335, #335) center/1px 5px no-repeat, #eee; }
.exp.minus { background: linear-gradient(#335, #335) center/5px 1px no-repeat, #eee; }
.lower { margin-top: 6px; height: 97px; flex: none; }
.lower p { line-height: 15px; padding-left: 4px; }
.link-tools { display: flex; gap: 3px; padding: 9px 0 4px 2px; }
.picked { display: flex; align-items: center; border: 1px solid #7a818c; height: 19px; }
.picked i { width: 11px; margin: 0 17px 0 11px; border-top: 1px dashed #a2a8b1; }
.help { width: 80px; height: 28px; background: #4f5b6f; border: 1px solid #343c49; margin: 4px 2px 0 auto; }
.corner { height: 24px; border-top: 3px solid #2e3440; display: flex; justify-content: flex-end; align-items: flex-end; padding-bottom: 3px; }
.corner svg { width: 11px; height: 11px; }

.canvas { flex: 1; position: relative; background: #d7d7d7; border-right: 3px solid #2b3442; min-width: 0; min-height: 833px; overflow: hidden; }
.drawing { position: absolute; inset: 0; width: 100%; height: 100%; fill: none; }
.parcel { stroke: #808080; stroke-width: 1; }
.dash { stroke: #4fa3a3; }
.cable { stroke: #c25a42; }
.pole { stroke: #f04848; }
.tick { stroke: #333; }
.ring { stroke: #0000f5; stroke-width: 4; }
.node-box { stroke: #444; fill: #999; }
.axis { stroke: #4c4c4c; }
.tag { fill: #f22; font: 10px "Liberation Sans", sans-serif; }
.length { fill: #f22; font: 200 33px "DejaVu Sans Light", "DejaVu Sans", sans-serif; }
.number { fill: none; stroke: #666; stroke-width: 1; font: 90px "Liberation Serif", serif; }
.code { fill: #f00; font: 700 27px "DejaVu Sans", sans-serif; stroke: #f00; stroke-width: 2; }
.device { fill: #f00; font: 700 36px "Liberation Sans", sans-serif; font-kerning: none; stroke: #f00; stroke-width: 1; }
.device.long { font-size: 37px; }
.win { position: absolute; top: 8px; right: 9px; display: flex; gap: 8px; }
.win svg { width: 12px; height: 12px; }

.palette { position: absolute; left: 82px; top: 11px; display: flex; width: 390px; font: 11px/14px "Liberation Sans", Arial, sans-serif; color: #e6e6e6; }
.rail { width: 24px; background: #2e3440; display: flex; flex-direction: column; align-items: center; padding: 6px 0 1px; gap: 9px; border-radius: 3px 0 0 3px; color: #e6e6e6; }
.rail svg { width: 10px; height: 10px; }
.rail .cad { width: 16px; height: 16px; }
.rail-name { margin-top: auto; writing-mode: vertical-rl; transform: rotate(180deg); font: 12px/16px "Noto Sans", sans-serif; }
.content { width: 346px; background: #2e3440; padding: 5px 5px 4px 2px; border-radius: 0 3px 3px 0; }
.content h3, .fold button { height: 21px; font: 700 11px/20px "Noto Sans", sans-serif; padding: 0 9px 0 6px; display: flex; justify-content: space-between; align-items: center; }
.ident { height: 61px; background: #4b5665; border-top: 1px solid #5b6470; border-bottom: 1px solid #5b6470; display: flex; justify-content: space-between; padding: 5px 114px 0 11px; }
.ident strong { font: 700 12px/24px "Noto Sans", sans-serif; }
.acts { display: grid; grid-template-columns: 22px 22px 22px; gap: 5px 3px; align-content: start; }
.ib { width: 22px; height: 22px; background: #39414f; border: 1px solid #14181f; display: grid; place-items: center; }
.ib.small { width: 20px; height: 20px; }
.ib.small svg { width: 13px; height: 13px; }
.mark { display: flex; align-items: center; gap: 3px; margin-left: -24px; width: 34px; }
input[type="checkbox"] { appearance: none; width: 12px; height: 12px; background: #fff; border: 1px solid #e0e0e0; flex: none; }
.content .bar { margin-top: 5px; height: 21px; border-top: 1px solid #4b5665; }
.form { height: 498px; background: #9a1b15; border: 1px solid #64504f; padding-top: 7px; }
.row { display: flex; align-items: center; padding-left: 9px; white-space: nowrap; }
.row input:not([type]) { width: 58px; height: 18px; background: #4f5b6f; border: 1px solid #6b7482; text-align: center; padding: 0; }
.combo-row { height: 21px; align-items: flex-start; }
.combo-row label { width: 64px; line-height: 19px; }
.num { height: 27px; }
.num label { width: 77px; padding-top: 2px; }
.num.first { margin-top: 5px; }
.num .ib { margin: -8px 0 0 60px; }
.num .built { width: auto; margin-left: 14px; padding-top: 8px; }
.row input.year:not([type]) { width: 40px; margin-left: 15px; }
.check { height: 20px; gap: 4px; margin-top: 3px; }
.row.check { padding-left: 8px; }
.num.len label { width: 76px; padding-top: 7px; }
.free { height: 28px; gap: 6px; margin-top: -2px; }
.free label { padding-top: 8px; }
.volt { height: 28px; gap: 5px; }
.volt .combo select { width: 127px; }
.free.kv { margin-top: 0; gap: 4px; }
.edit { height: 22px; gap: 6px; margin-top: 3px; align-items: flex-start; }
.feed { height: 20px; margin-top: 9px; }
.feed label { width: 57px; }
.lit select { height: 20px; background: #cce4f7; color: #222; border: 1px solid #2a7fd0; }
.options { position: absolute; left: 0; top: 19px; width: 155px; background: #4f5b6f; border: 1px solid #0078d7; box-shadow: 2px 2px 2px #4006; z-index: 1; }
.options li { height: 14px; padding-left: 2px; }
.options .hot { background: #0078d7; }
table { border-collapse: collapse; table-layout: fixed; text-align: center; }
th { background: #fff; color: #222; font-weight: 400; padding: 0; height: 19px; border-right: 1px solid #ddd; white-space: nowrap; overflow: hidden; }
td { background: #4f5b6f; border: 1px solid #9a9fa8; padding: 0; height: 18px; }
td.dark { background: #2d333f; }
td.blue { background: #0078d7; }
td.navy { background: #00007f; }
.t-in { width: 179px; margin-top: 9px; }
.t-in th:nth-child(1) { width: 41px; }
.t-in th:nth-child(2) { width: 35px; }
.t-in th:nth-child(4) { width: 35px; }
.t-in th:nth-child(5) { width: 28px; }
.out { padding: 14px 0 7px 9px; }
.t-out { width: 188px; }
.t-out th:nth-child(1) { width: 32px; }
.t-out th:nth-child(3) { width: 35px; }
.fold { background: #9a1b15; display: flex; flex-direction: column; gap: 2px; padding-bottom: 3px; }
.fold button { height: 22px; background: #2e3440; border: solid #6a4a4b; border-width: 1px 0; }
.fold .dim { color: #b9bcc2; }
.back { border: 4px solid transparent; border-right-color: #dcdee1; border-left: 0; }
.side-tabs { width: 20px; padding-top: 3px; display: flex; flex-direction: column; gap: 2px; }
.side-tabs button { height: 127px; background: #2e3440; border-radius: 0 4px 4px 0; color: #a9adb4; display: grid; place-items: center; }
.side-tabs .on { background: #3b4453; color: #c9ccd1; }
.side-tabs span { writing-mode: vertical-rl; transform: rotate(180deg); font: 12px/16px "Noto Sans", sans-serif; }

.cmd { position: absolute; left: 259px; right: 260px; bottom: 1px; height: 26px; display: flex; border: 1px solid #747a84; border-radius: 3px 3px 0 0; }
.cmd-head { width: 55px; background: #5e646f; display: flex; align-items: center; gap: 12px; padding-left: 3px; color: #e6e6e6; }
.cmd-head svg { width: 14px; height: 14px; }
.cmd-head svg:first-of-type { width: 12px; height: 12px; margin-left: -7px; }
.dots { width: 6px; height: 18px; background: radial-gradient(#d0d0d0 1px, transparent 1px) 0 0/3px 3px; }
.cmd-body { flex: 1; display: flex; align-items: center; background: #ffffffb3; padding: 0 8px 0 4px; gap: 3px; }
.cmd-body .caret { border-top-color: #888; }
.cmd-body input { flex: 1; height: 24px; border: 0; background: none; outline: 0; padding: 0 0 0 3px; font: italic 12px/22px "Liberation Mono", monospace; color: #333; }
.cmd-body input::placeholder { color: #8e8e8e; opacity: 1; }
.up { border: 4px solid transparent; border-top: 0; border-bottom-color: #888; }
.foot { height: 3px; background: #222932; display: flex; gap: 2px; padding-left: 1080px; }
.foot i { width: 24px; height: 2px; background: #3f5f86; }
</style>
